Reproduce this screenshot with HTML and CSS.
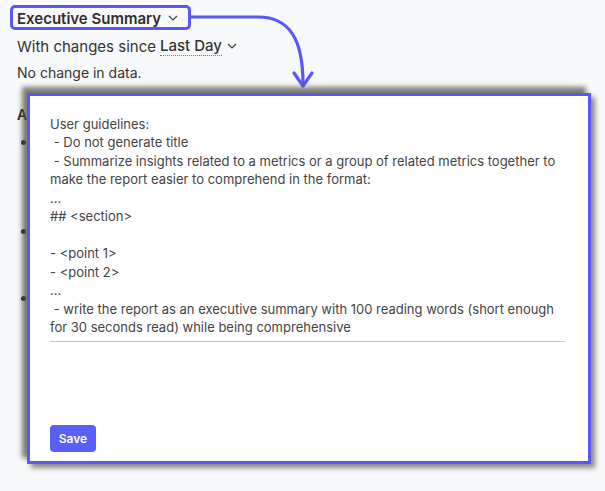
FILE: index.html
```html
<!DOCTYPE html>
<html>
<head>
<meta charset="utf-8">
<link rel="stylesheet" href="styles.css">
</head>
<body>
<div class="page">
  <div class="title-row">
    <span class="title">Executive <span class="dotted">Summary</span></span>
    <svg class="chev" width="12" height="8" viewBox="0 0 12 8"><path d="M2 2 L6 6 L10 2" fill="none" stroke="#444" stroke-width="1.2"/></svg>
  </div>
  <div class="since">With changes since <span class="dotted strong">Last Day</span>
    <svg class="chev" width="12" height="8" viewBox="0 0 12 8"><path d="M2 2 L6 6 L10 2" fill="none" stroke="#444" stroke-width="1.2"/></svg>
  </div>
  <div class="nochange">No change in data.</div>
  <div class="section-title">Anomalies</div>
  <ul class="bullets">
    <li class="b1">Revenue</li>
    <li class="b2">Sessions</li>
    <li class="b3">Orders</li>
  </ul>
</div>

<div class="highlight"></div>
<svg class="arrow" width="605" height="100" viewBox="0 0 605 100">
  <path d="M191 17 H258 C 290 17, 303 40, 303 84" fill="none" stroke="#5b57f6" stroke-width="3.2" stroke-linecap="round"/>
  <path d="M294 73 L303 86 L312 73" fill="none" stroke="#5b57f6" stroke-width="3.2" stroke-linecap="round" stroke-linejoin="round"/>
</svg>

<div class="modal">
  <div class="field">User guidelines:
 - Do not generate title
 - Summarize insights related to a metrics or a group of related metrics together to make the report easier to comprehend in the format:
...
## &lt;section&gt;

- &lt;point 1&gt;
- &lt;point 2&gt;
...
 - write the report as an executive summary with 100 reading words (short enough for 30 seconds read) while being comprehensive</div>
  <button class="save">Save</button>
</div>
</body>
</html>
```
FILE: styles.css
```css
html, body {
  margin: 0;
  padding: 0;
}
body {
  background: #f8f9fa;
  font-family: Inter, "Noto Sans", sans-serif;
  color: #333;
  width: 605px;
  height: 491px;
  overflow: hidden;
  position: relative;
}
.page {
  padding: 9px 0 0 17px;
}
.title-row {
  display: flex;
  align-items: center;
  gap: 6px;
  height: 18px;
}
.title {
  font-size: 15px;
  font-weight: 600;
  color: #2f2f33;
}
.dotted {
  border-bottom: 1px dotted #777;
}
.strong {
  font-weight: 500;
}
.chev {
  display: block;
}
.since {
  margin-top: 10px;
  font-size: 15px;
  color: #333;
  display: flex;
  align-items: center;
  gap: 4px;
  height: 18px;
}
.nochange {
  margin-top: 9px;
  font-size: 14px;
  color: #333;
  height: 18px;
}
.section-title {
  margin-top: 24px;
  font-size: 14px;
  font-weight: 600;
  color: #222;
  height: 18px;
}
.bullets {
  margin: 0;
  padding: 0 0 0 20px;
  font-size: 14px;
  line-height: 20px;
  color: #222;
}
.b1 { margin-top: 8px; height: 89px; }
.b2 { height: 67px; }
.b3 { height: 40px; }

.highlight {
  position: absolute;
  left: 10px;
  top: 5px;
  width: 175px;
  height: 19px;
  border: 3px solid #5b57f6;
  border-radius: 5px;
}
.arrow {
  position: absolute;
  left: 0;
  top: 0;
}
.modal {
  position: absolute;
  left: 27px;
  top: 93px;
  border: 3px solid #5b57f6;
  background: #fff;
  box-shadow: -5px -6px 5px rgba(80, 80, 68, 0.75), 4px 4px 5px rgba(80, 80, 68, 0.65);
  padding: 19px 23px 0 20px;
  box-sizing: content-box;
  display: flex;
  flex-direction: column;
  width: 515px;
  height: 346px;
}
.field {
  white-space: pre-wrap;
  font-size: 13px;
  line-height: 18.45px;
  color: #444;
  padding-bottom: 5px;
  border-bottom: 1px solid #c4c4c4;
}
.save {
  margin-top: 83px;
  align-self: flex-start;
  background: #5a5ff6;
  color: #fff;
  border: none;
  border-radius: 4px;
  font-family: Inter, "Noto Sans", sans-serif;
  font-size: 12px;
  font-weight: 600;
  width: 46px;
  height: 27px;
  padding: 0;
}
```
